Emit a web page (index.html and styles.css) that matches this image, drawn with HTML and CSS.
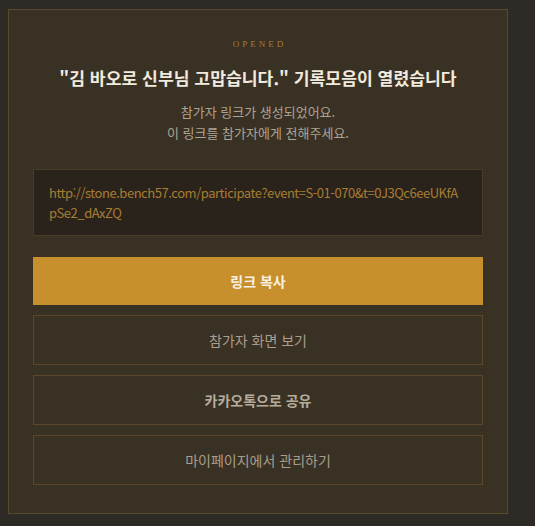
FILE: index.html
```html
<!DOCTYPE html>
<html lang="ko">
<head>
<meta charset="utf-8">
<title>기록모음이 열렸습니다</title>
<link rel="stylesheet" href="styles.css">
</head>
<body>
<main class="card">
  <p class="eyebrow">OPENED</p>
  <h1 class="title">"김 바오로 신부님 고맙습니다." 기록모음이 열렸습니다</h1>
  <p class="desc">참가자 링크가 생성되었어요.<br>이 링크를 참가자에게 전해주세요.</p>
  <div class="url">http://stone.bench57.com/participate?event=S-01-070&amp;t=0J3Qc6eeUKfApSe2_dAxZQ</div>
  <div class="actions">
    <button class="btn btn-primary" type="button">링크 복사</button>
    <button class="btn" type="button">참가자 화면 보기</button>
    <button class="btn btn-strong" type="button">카카오톡으로 공유</button>
    <button class="btn" type="button">마이페이지에서 관리하기</button>
  </div>
</main>
</body>
</html>
```
FILE: styles.css
```css
* { box-sizing: border-box; }
html, body { margin: 0; }
body {
  background: #2e2a25;
  padding: 9px 8px;
  font-family: "Noto Sans CJK KR", "Noto Sans", sans-serif;
  color: #b4aa9a;
}
.card {
  width: 500px;
  background: #3a3125;
  border: 1px solid #5a4a2c;
  padding: 27px 24px 28px;
  text-align: center;
}
.eyebrow {
  margin: 0;
  font-family: "Liberation Serif", serif;
  font-size: 9px;
  line-height: 14px;
  letter-spacing: 3px;
  color: #a47e36;
  padding-left: 3px;
}
.title {
  margin: 14px 0 0;
  font-size: 17.2px;
  line-height: 26px;
  font-weight: 700;
  color: #f1ebdf;
}
.desc {
  margin: 10px 0 0;
  font-size: 13px;
  line-height: 21px;
  color: #ada392;
}
.url {
  margin-top: 26px;
  background: #2a231b;
  border: 1px solid #4a3d27;
  padding: 13px 19px 13px 15px;
  text-align: left;
  font-size: 13px;
  line-height: 20px;
  letter-spacing: -0.47px;
  color: #a67d33;
  word-break: break-all;
  height: 67px;
}
.actions {
  margin-top: 21px;
  display: flex;
  flex-direction: column;
  gap: 10px;
}
.btn {
  display: block;
  width: 100%;
  height: 50px;
  background: transparent;
  border: 1px solid #5a4728;
  font-family: inherit;
  font-size: 14px;
  color: #a89e8e;
  padding: 0;
}
.btn-primary {
  height: 48px;
  border: none;
  background: #c8902c;
  color: #f7f1e4;
  font-weight: 700;
}
.btn-strong {
  font-weight: 700;
  color: #b6ac9c;
}
```
